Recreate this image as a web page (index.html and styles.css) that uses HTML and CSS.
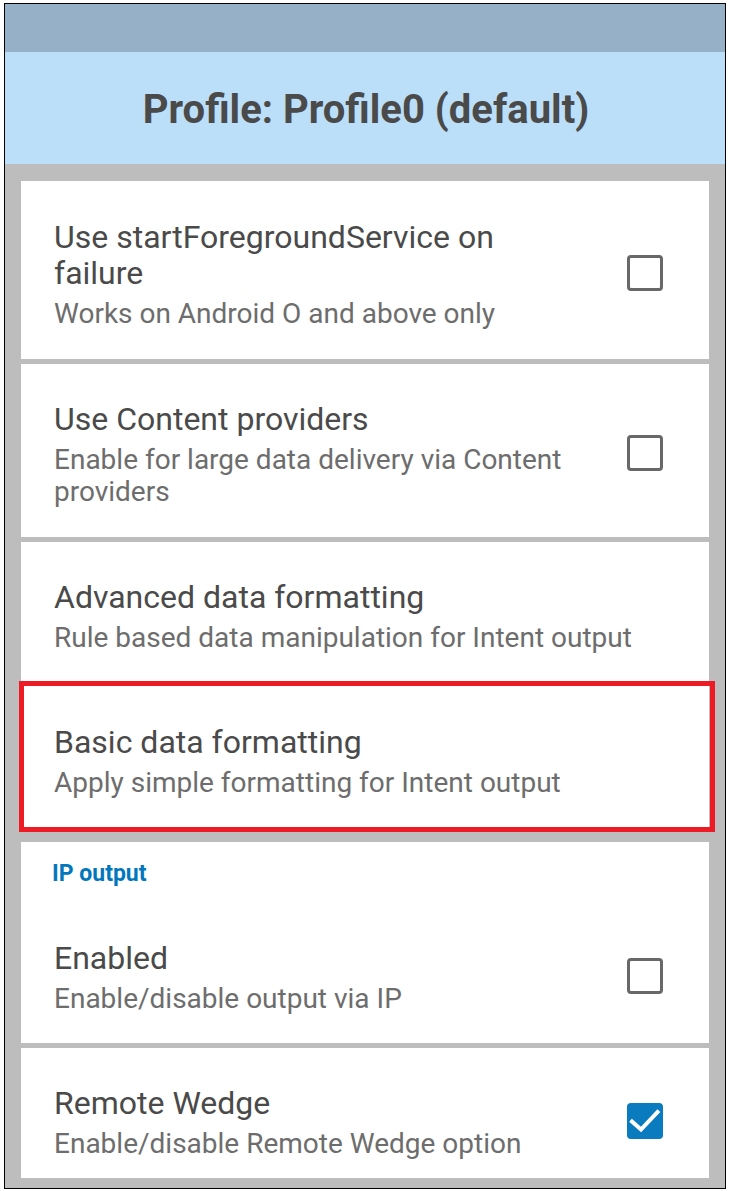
FILE: index.html
```html
<!DOCTYPE html>
<html>
<head>
<meta charset="utf-8">
<link rel="stylesheet" href="styles.css">
</head>
<body>
<div class="frame">
  <div class="status"></div>
  <header class="titlebar"><h1>Profile: Profile0 (default)</h1></header>
  <main class="list">
    <section class="card c1">
      <div class="row">
        <div class="text">
          <div class="title">Use startForegroundService on failure</div>
          <div class="summary">Works on Android O and above only</div>
        </div>
        <span class="cb"></span>
      </div>
    </section>
    <section class="card c2">
      <div class="row">
        <div class="text">
          <div class="title">Use Content providers</div>
          <div class="summary">Enable for large data delivery via Content providers</div>
        </div>
        <span class="cb"></span>
      </div>
    </section>
    <section class="card c3">
      <div class="row">
        <div class="text wide">
          <div class="title">Advanced data formatting</div>
          <div class="summary">Rule based data manipulation for Intent output</div>
        </div>
      </div>
    </section>
    <section class="card c4 highlighted">
      <div class="row">
        <div class="text wide">
          <div class="title">Basic data formatting</div>
          <div class="summary">Apply simple formatting for Intent output</div>
        </div>
      </div>
    </section>
    <section class="card c5">
      <div class="category">IP output</div>
      <div class="row">
        <div class="text">
          <div class="title">Enabled</div>
          <div class="summary">Enable/disable output via IP</div>
        </div>
        <span class="cb"></span>
      </div>
    </section>
    <section class="card c6">
      <div class="row">
        <div class="text">
          <div class="title">Remote Wedge</div>
          <div class="summary">Enable/disable Remote Wedge option</div>
        </div>
        <span class="cb checked"><svg viewBox="0 0 36 36" width="36" height="36"><path d="M5 18.5 L14 26.5 L30.5 9" fill="none" stroke="#fff" stroke-width="4" stroke-linecap="square"/></svg></span>
      </div>
    </section>
  </main>
</div>
</body>
</html>
```

FILE: styles.css
```css
* { box-sizing: border-box; }
html, body { margin: 0; padding: 0; background: #fff; }
body { font-family: Roboto, "Noto Sans", "Liberation Sans", sans-serif; }

.frame {
  margin: 3px 0 0 4px;
  width: 722px;
  height: 1186px;
  border: 1px solid #000;
  background: #bdbdbd;
  overflow: hidden;
  display: flex;
  flex-direction: column;
}

.status {
  height: 48px;
  flex: none;
  background: #95b0c7;
}

.titlebar {
  height: 112px;
  flex: none;
  background: #bbdef9;
  display: flex;
  align-items: center;
  justify-content: center;
  padding-top: 4px;
}
.titlebar h1 {
  margin: 0 0 0 2px;
  font-size: 40px;
  font-weight: 700;
  color: #4a4a4a;
  line-height: 46px;
}

.list {
  padding: 17px 16px 0 16px;
  display: flex;
  flex-direction: column;
  gap: 5px;
}

.card {
  background: #fff;
  flex: none;
  padding-left: 33px;
  padding-right: 16px;
  position: relative;
}
.c1 { height: 178px; padding-top: 38px; }
.c2 { height: 173px; padding-top: 37px; }
.c3 { height: 139px; padding-top: 37px; }
.c4 { height: 151px; padding-top: 43px; margin-top: -5px; margin-bottom: 5px; }
.c5 { height: 201px; padding-top: 20px; }
.c6 { height: 130px; padding-top: 37px; }

.highlighted::after {
  content: "";
  position: absolute;
  left: -2px;
  right: -6px;
  top: 0;
  bottom: 0;
  border: 5px solid #ed1c24;
}

.row {
  display: flex;
  align-items: center;
}
.text {
  width: 526px;
  flex: none;
}
.text.wide { width: auto; flex: 1; }

.title {
  font-size: 32px;
  line-height: 36px;
  color: #4a4a4a;
}
.summary {
  margin-top: 7px;
  font-size: 28px;
  line-height: 32px;
  color: #6d6d6d;
}

.category {
  margin-left: -2px;
  font-size: 23px;
  line-height: 24px;
  font-weight: 700;
  color: #0277bd;
  margin-bottom: 54px;
}

.cb {
  flex: none;
  width: 36px;
  height: 36px;
  margin-left: 47px;
  margin-bottom: 4px;
  border: 3px solid #686868;
  border-radius: 4px;
  display: block;
}
.cb.checked {
  border: none;
  background: #0a7bbf;
}
.cb svg { display: block; }
```
